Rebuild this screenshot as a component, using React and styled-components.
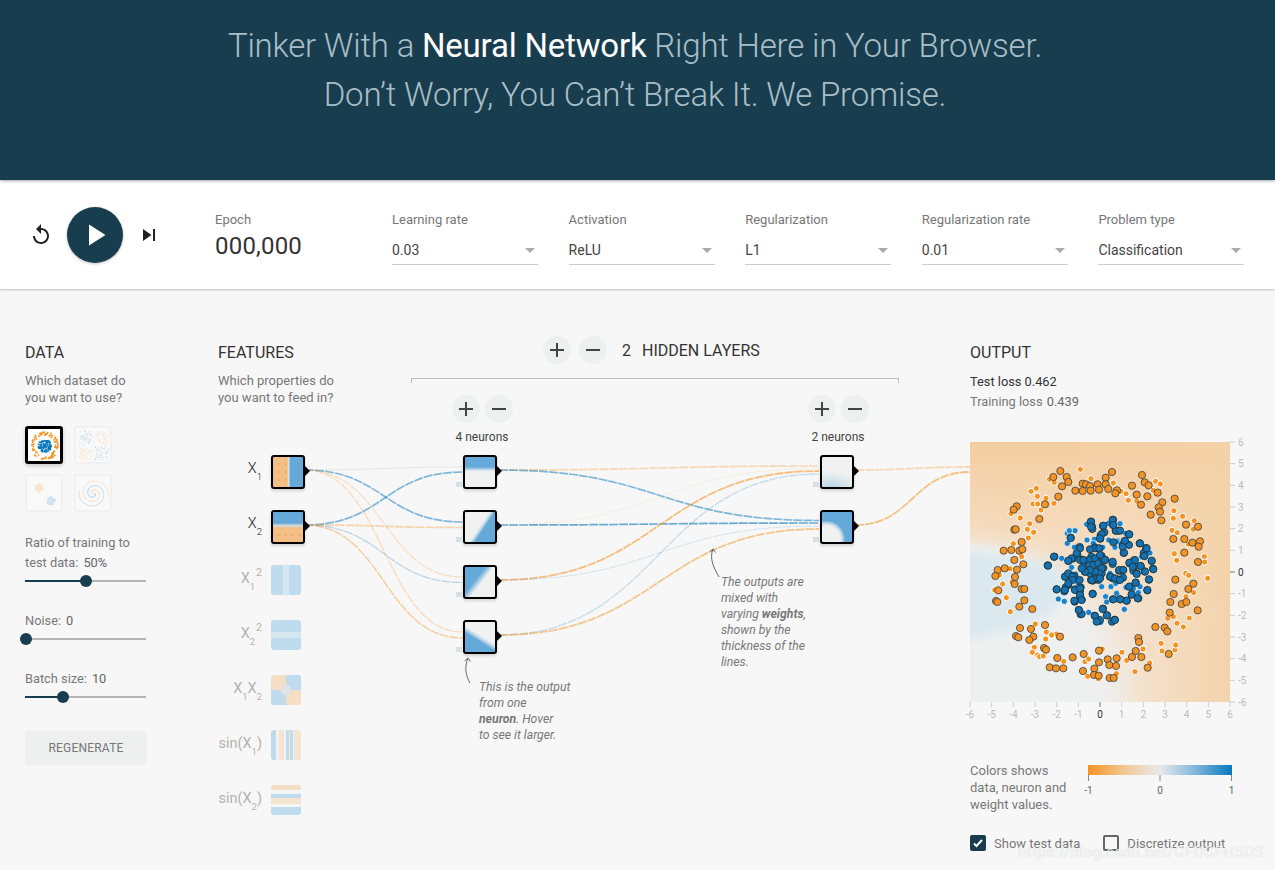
import styled, { createGlobalStyle } from "styled-components";

const NAVY = "#183d4e";
const BLUE = "#0877bd";
const ORANGE = "#f59322";
const HEAT_BLUE = "#64a9d8";
const HEAT_ORANGE = "#f3bf84";
const HEAT_LIGHT = "#f0f1f1";

const GlobalStyle = createGlobalStyle`
  html, body {
    margin: 0;
    padding: 0;
    background: #f7f7f7;
    font-family: Roboto, "Helvetica Neue", Arial, sans-serif;
    overflow: hidden;
  }
  * { box-sizing: border-box; }
`;

const Page = styled.div`
  width: 1275px;
  height: 870px;
  position: relative;
  overflow: hidden;
`;

const Header = styled.header`
  height: 180px;
  background: ${NAVY};
  padding: 21px 5px 0 0;
  text-align: center;
  position: relative;
  z-index: 2;
  box-shadow: 0 1px 3px rgba(0, 0, 0, 0.35);
`;

const Headline = styled.h1`
  margin: 0;
  font-size: 33px;
  line-height: 49px;
  font-weight: 300;
  letter-spacing: -0.2px;
  color: #a8bec7;
  b {
    font-weight: 400;
    color: #fff;
  }
`;

const Toolbar = styled.section`
  height: 109px;
  background: #fff;
  display: flex;
  align-items: center;
  padding: 1px 0 0 29px;
  box-shadow: 0 1px 2px rgba(0, 0, 0, 0.22);
  position: relative;
  z-index: 1;
`;

const Controls = styled.div`
  display: flex;
  align-items: center;
  width: 186px;
  color: #222;
  svg { display: block; fill: currentColor; }
`;

const PlayButton = styled.div`
  width: 56px;
  height: 56px;
  margin: 0 14px 0 14px;
  border-radius: 50%;
  background: ${NAVY};
  display: flex;
  align-items: center;
  justify-content: center;
  box-shadow: 0 1px 3px rgba(0, 0, 0, 0.25);
  svg { fill: #fff; }
`;

const EpochBox = styled.div`
  width: 177px;
  padding-top: 5px;
`;

const FieldLabel = styled.div`
  font-size: 13px;
  line-height: 18px;
  color: #777;
`;

const EpochValue = styled.div`
  margin-top: -1px;
  font-size: 24px;
  line-height: 36px;
  letter-spacing: 0.2px;
  color: #333;
`;

const Dropdowns = styled.div`
  display: flex;
  gap: 30.5px;
`;

const Dropdown = styled.div`
  width: 146.1px;
  padding-top: 5px;
`;

const DropdownValue = styled.div`
  height: 36px;
  padding-top: 8px;
  display: flex;
  align-items: center;
  justify-content: space-between;
  padding-right: 3px;
  font-size: 14px;
  color: #444;
  border-bottom: 1px solid #ccc;
  &::after {
    content: "";
    border-left: 5px solid transparent;
    border-right: 5px solid transparent;
    border-top: 5px solid #aaa;
  }
`;

const Main = styled.main`
  position: relative;
  height: 581px;
  padding: 54px 0 0 25px;
  display: grid;
  grid-template-columns: 193px 193px 488px 1fr;
  background: #f7f7f7;
`;

const LinkLayer = styled.svg`
  position: absolute;
  left: 0;
  top: 0;
  pointer-events: none;
`;

const Column = styled.div`
  display: flex;
  flex-direction: column;
  position: relative;
`;

const OutputColumn = styled(Column)`
  padding-left: 71px;
`;

const Heading = styled.h4`
  margin: 0;
  font-size: 16px;
  line-height: 20px;
  font-weight: 400;
  color: #333;
`;

const Note = styled.p`
  margin: 9px 0 0;
  font-size: 13px;
  line-height: 17px;
  color: #777;
`;

const DatasetGrid = styled.div`
  margin-top: 20px;
  display: grid;
  grid-template-columns: 38px 38px;
  grid-auto-rows: 38px;
  gap: 10px 11px;
`;

const DatasetThumb = styled.div`
  border-radius: 3px;
  border: ${({ $active }) => ($active ? "3px solid #000" : "2px solid #f1f1f1")};
  box-shadow: ${({ $active }) => ($active ? "0 2px 4px rgba(0,0,0,0.18)" : "none")};
  overflow: hidden;
  background: ${({ $active }) => ($active ? "#fff" : "#f9f9f9")};
  svg {
    display: block;
    width: 100%;
    height: 100%;
    opacity: ${({ $active }) => ($active ? 1 : 0.2)};
  }
`;

const SliderLabel = styled.div`
  font-size: 12.8px;
  line-height: 20px;
  color: #777;
  margin-top: 21px;
  width: 122px;
  span { margin-left: 5px; color: #666; }
`;

const SliderTrack = styled.div`
  position: relative;
  width: 121px;
  height: 18px;
  margin-top: -1px;
  &::before {
    content: "";
    position: absolute;
    left: 0;
    right: 0;
    top: 8px;
    height: 2px;
    background: #b4b4b4;
  }
`;

const SliderFill = styled.div`
  position: absolute;
  left: 0;
  top: 8px;
  height: 2px;
  background: ${NAVY};
`;

const SliderThumb = styled.div`
  position: absolute;
  top: 3px;
  width: 12px;
  height: 12px;
  margin-left: -6px;
  border-radius: 50%;
  background: ${NAVY};
`;

const RegenerateButton = styled.div`
  margin-top: 25px;
  width: 122px;
  height: 34px;
  border-radius: 3px;
  background: #eef0f0;
  color: #777;
  font-size: 12px;
  letter-spacing: 0.2px;
  display: flex;
  align-items: center;
  justify-content: center;
`;

const FeatureList = styled.div`
  margin-top: 49px;
  display: flex;
  flex-direction: column;
  gap: 21px;
  position: relative;
  z-index: 2;
`;

const FeatureRow = styled.div`
  display: flex;
  align-items: flex-start;
  height: 34px;
  gap: 9px;
`;

const FeatureName = styled.div`
  width: 44px;
  height: 30px;
  padding-bottom: 4px;
  display: flex;
  align-items: center;
  justify-content: flex-end;
  white-space: nowrap;
  font-size: 14.5px;
  font-weight: ${({ $on }) => ($on ? 300 : 400)};
  color: ${({ $on }) => ($on ? "#222" : "#b4b1ac")};
  sub, sup { line-height: 0; }
  sub { font-size: 9.5px; position: relative; top: 9px; }
  sup { font-size: 10.5px; position: relative; top: -5px; margin-left: 1px; }
`;

const DOTS = `radial-gradient(circle, rgba(245, 147, 34, 0.75) 0.5px, transparent 1px) 2px 3px / 7px 8px`;

const HEAT = {
  x1: `linear-gradient(90deg, transparent 0 47%, #e0e2e2 52%, ${HEAT_BLUE} 58%), ${DOTS}, ${HEAT_ORANGE}`,
  x2: `linear-gradient(180deg, ${HEAT_BLUE} 0 37%, #d3dbdd 45%, transparent 55%), ${DOTS}, ${HEAT_ORANGE}`,
  x1sq: "linear-gradient(90deg, #bedcee 0 40%, #d4e6ee 40% 60%, #bedcee 60%)",
  x2sq: "linear-gradient(180deg, #bedcee 0 40%, #d4e6ee 40% 60%, #bedcee 60%)",
  x1x2: "radial-gradient(circle, #dfe5e6 0 4px, transparent 6px), conic-gradient(#bedcee 0 25%, #f5dfc4 25% 50%, #bedcee 50% 75%, #f5dfc4 75%)",
  sinx1: "linear-gradient(90deg, #bedcee 0 15%, #f1f3f3 15% 25%, #f5e4cf 25% 45%, #f1f3f3 45% 50%, #bedcee 50% 60%, #f5e4cf 60% 65%, #bedcee 65% 72%, #f1f3f3 72% 78%, #f5e4cf 78% 100%)",
  sinx2: "linear-gradient(180deg, #f5dfc4 0 18%, #f4f5f5 18% 30%, #bedcee 30% 42%, #f5e4cf 42% 62%, #f4f5f5 62% 72%, #bedcee 72% 100%)",
  n1: `linear-gradient(180deg, ${HEAT_BLUE} 0 33%, #a8cde3 40%, ${HEAT_LIGHT} 47%)`,
  n2: `linear-gradient(124deg, ${HEAT_LIGHT} 0 48%, #c9dfec 53%, ${HEAT_BLUE} 60%)`,
  n3: `linear-gradient(128deg, ${HEAT_BLUE} 0 38%, #a8cde3 46%, ${HEAT_LIGHT} 54%)`,
  n4: `linear-gradient(212deg, ${HEAT_LIGHT} 0 46%, #b8d6e8 53%, ${HEAT_BLUE} 60%)`,
  m1: `radial-gradient(ellipse 90% 50% at 30% 100%, #b9d6e7 0, ${HEAT_LIGHT} 100%)`,
  m2: `radial-gradient(circle at 15% 90%, ${HEAT_LIGHT} 0 36%, #b3d3e6 44%, ${HEAT_BLUE} 50%)`,
};

const FeatureThumb = styled.div`
  width: ${({ $on }) => ($on ? "34px" : "30px")};
  height: ${({ $on }) => ($on ? "34px" : "30px")};
  flex: none;
  position: relative;
  border-radius: 3px;
  border: ${({ $on }) => ($on ? "2px solid #000" : "none")};
  background: ${({ $heat }) => HEAT[$heat]};
  box-shadow: ${({ $on }) => ($on ? "0 2px 3px rgba(0,0,0,0.15)" : "none")};
  &::after {
    content: "";
    display: ${({ $on }) => ($on ? "block" : "none")};
    position: absolute;
    right: -7px;
    top: 9px;
    border-left: 5px solid #000;
    border-top: 5px solid transparent;
    border-bottom: 5px solid transparent;
  }
`;

const LayerHead = styled.div`
  margin-top: -7px;
  height: 28px;
  display: flex;
  align-items: center;
  padding-left: 132px;
  gap: 8px;
`;

const RoundButton = styled.div`
  width: 28px;
  height: 28px;
  border-radius: 50%;
  background: #eef0f0;
  color: #444;
  display: flex;
  align-items: center;
  justify-content: center;
  svg { display: block; fill: currentColor; }
`;

const LayerCount = styled.div`
  margin-left: 7px;
  font-size: 16px;
  color: #333;
  display: flex;
  gap: 11px;
`;

const Bracket = styled.div`
  margin-top: 14px;
  height: 5px;
  border: 1px solid #bdbdbd;
  border-bottom: none;
`;

const Layers = styled.div`
  margin-top: 12px;
  display: flex;
  justify-content: space-between;
  padding: 0 11px 0 21px;
  position: relative;
  z-index: 2;
`;

const Layer = styled.div`
  width: 100px;
  display: flex;
  flex-direction: column;
  align-items: center;
`;

const NeuronButtons = styled.div`
  display: flex;
  gap: 5px;
`;

const NeuronCount = styled.div`
  margin-top: 5px;
  height: 18px;
  font-size: 12px;
  line-height: 18px;
  color: #444;
`;

const NeuronStack = styled.div`
  margin-top: 9px;
  margin-right: ${({ $shift }) => $shift}px;
  display: flex;
  flex-direction: column;
  gap: 21px;
  &> div::before {
    content: "";
    position: absolute;
    left: -9px;
    bottom: 0;
    width: 6px;
    height: 5px;
    background: #d7e0e4;
  }
`;

const Callout = styled.div`
  position: absolute;
  left: ${({ $x }) => $x}px;
  top: ${({ $y }) => $y}px;
  font-size: 12.2px;
  line-height: 16px;
  font-style: italic;
  color: #777;
  white-space: pre-line;
  z-index: 3;
  b { font-weight: 700; }
`;

const LossTest = styled.div`
  margin-top: 9px;
  font-size: 12.8px;
  line-height: 20px;
  color: #333;
`;

const LossTrain = styled.div`
  font-size: 12.8px;
  line-height: 20px;
  color: #777;
  span { color: #666; margin-left: 1px; }
`;

const PlotSvg = styled.svg`
  display: block;
  margin-top: 30px;
  overflow: visible;
`;

const Legend = styled.div`
  margin-top: 30px;
  display: flex;
`;

const LegendText = styled.div`
  width: 118px;
  font-size: 13px;
  line-height: 17px;
  color: #777;
`;

const LegendScale = styled.svg`
  display: block;
  margin-top: 3px;
  overflow: visible;
`;

const CheckRow = styled.div`
  margin-top: 21px;
  height: 18px;
  display: flex;
  align-items: center;
`;

const CheckBox = styled.div`
  width: 16px;
  height: 16px;
  border-radius: 2px;
  border: 2px solid ${({ $on }) => ($on ? NAVY : "#666")};
  background: ${({ $on }) => ($on ? NAVY : "transparent")};
  margin-right: 8px;
  display: flex;
  align-items: center;
  justify-content: center;
`;

const CheckText = styled.div`
  font-size: 13px;
  color: #777;
  margin-right: ${({ $gap }) => $gap || 0}px;
`;

const Watermark = styled.div`
  position: absolute;
  left: 1018px;
  top: 843px;
  font-size: 15px;
  line-height: 18px;
  letter-spacing: 0.5px;
  color: rgba(255, 255, 255, 0.75);
  text-shadow: 0 0 1px rgba(150, 150, 150, 0.45);
  white-space: nowrap;
  z-index: 5;
`;

function seeded(seed) {
  let s = seed;
  return () => {
    s = (s + 0x6d2b79f5) | 0;
    let t = Math.imul(s ^ (s >>> 15), 1 | s);
    t = (t + Math.imul(t ^ (t >>> 7), 61 | t)) ^ t;
    return ((t ^ (t >>> 14)) >>> 0) / 4294967296;
  };
}

function makeDataset(kind) {
  const r = seeded(kind.length * 97 + 3);
  const pts = [];
  if (kind === "circle") {
    for (let i = 0; i < 90; i++) {
      const a = r() * Math.PI * 2;
      const d = Math.sqrt(r()) * 6.5;
      pts.push([16 + Math.cos(a) * d, 16 + Math.sin(a) * d, BLUE]);
      const b = r() * Math.PI * 2;
      const e = 10.5 + r() * 3.5;
      pts.push([16 + Math.cos(b) * e, 16 + Math.sin(b) * e, ORANGE]);
    }
  } else if (kind === "xor") {
    for (let i = 0; i < 220; i++) {
      const x = 2 + r() * 28;
      const y = 2 + r() * 28;
      if (Math.abs(x - 16) < 1 || Math.abs(y - 16) < 1) continue;
      pts.push([x, y, (x - 16) * (y - 16) > 0 ? BLUE : ORANGE]);
    }
  } else if (kind === "gauss") {
    for (let i = 0; i < 90; i++) {
      const a = r() * Math.PI * 2;
      const d = Math.sqrt(r()) * 4;
      pts.push([11 + Math.cos(a) * d, 11 + Math.sin(a) * d, ORANGE]);
      const b = r() * Math.PI * 2;
      const e = Math.sqrt(r()) * 4;
      pts.push([22 + Math.cos(b) * e, 23 + Math.sin(b) * e, BLUE]);
    }
  } else {
    for (let i = 0; i < 110; i++) {
      const t = (i / 110) * 3.1 * Math.PI;
      const d = 1 + t * 1.35;
      pts.push([16 + Math.cos(t) * d, 16 + Math.sin(t) * d, BLUE]);
      pts.push([16 - Math.cos(t) * d, 16 - Math.sin(t) * d, ORANGE]);
    }
  }
  return pts;
}

function Dataset({ kind, active }) {
  const size = active ? 1.6 : 1;
  return (
    <DatasetThumb $active={active}>
      <svg viewBox="0 0 32 32">
        {makeDataset(kind).map(([x, y, c], i) => (
          <rect key={i} x={x} y={y} width={size} height={size} fill={c} />
        ))}
      </svg>
    </DatasetThumb>
  );
}

function Slider({ value }) {
  return (
    <SliderTrack>
      <SliderFill style={{ width: value }} />
      <SliderThumb style={{ left: value }} />
    </SliderTrack>
  );
}

const FEATURES = [
  { heat: "x1", on: true, name: <>X<sub>1</sub></> },
  { heat: "x2", on: true, name: <>X<sub>2</sub></> },
  { heat: "x1sq", name: <>X<sub>1</sub><sup>2</sup></> },
  { heat: "x2sq", name: <>X<sub>2</sub><sup>2</sup></> },
  { heat: "x1x2", name: <>X<sub>1</sub>X<sub>2</sub></> },
  { heat: "sinx1", name: <>sin(X<sub>1</sub>)</> },
  { heat: "sinx2", name: <>sin(X<sub>2</sub>)</> },
];

// page coordinates, viewBox of the link layer starts at y=289
const LINKS = [
  [305, 470, 463, 467, "#bbb", 1, 0.3],
  [305, 470, 463, 522, BLUE, 1.7, 0.5],
  [305, 470, 463, 577, ORANGE, 1.2, 0.25],
  [305, 470, 463, 632, ORANGE, 1.2, 0.3],
  [305, 525, 463, 472, BLUE, 1.7, 0.5],
  [305, 525, 463, 527.5, ORANGE, 1.7, 0.35],
  [305, 525, 463, 582.5, BLUE, 1.2, 0.28],
  [305, 525, 463, 638, ORANGE, 1.5, 0.42],
  [499, 470, 819, 466, ORANGE, 1.7, 0.32],
  [499, 470, 819, 520.5, BLUE, 1.7, 0.5],
  [499, 525, 819, 468.5, ORANGE, 1, 0.12],
  [499, 525, 819, 523, BLUE, 1.7, 0.6],
  [499, 580, 819, 471, ORANGE, 1.8, 0.58],
  [499, 580, 819, 526, BLUE, 1, 0.16],
  [499, 635, 819, 474, BLUE, 1.3, 0.22],
  [499, 635, 819, 529, ORANGE, 1.8, 0.5],
  [855, 470, 970, 467, ORANGE, 1.8, 0.3],
  [855, 525, 970, 472, ORANGE, 1.8, 0.55],
];

const curve = (x0, y0, x1, y1) => {
  const m = (x0 + x1) / 2;
  return `M${x0} ${y0}C${m} ${y0} ${m} ${y1} ${x1} ${y1}`;
};

// scatter points as read from the plot, 3 units per pixel, plot origin at 30,36
const ORANGE_TRAIN = [[301,123],[280,141],[320,141],[325,156],[306,169],[368,161],[378,163],[413,163],[437,143],[456,126],[437,163],[390,168],[368,183],[346,182],[392,182],[417,179],[445,177],[471,181],[466,190],[516,167],[546,135],[554,157],[566,166],[593,188],[530,194],[562,199],[543,224],[607,217],[596,232],[600,245],[572,254],[604,271],[644,206],[295,200],[255,223],[238,267],[170,229],[161,239],[163,299],[167,298],[185,336],[131,362],[154,360],[178,362],[187,358],[163,390],[190,403],[171,419],[113,420],[106,438],[134,415],[165,441],[164,462],[185,477],[193,477],[115,481],[108,513],[112,516],[178,530],[193,511],[217,537],[180,594],[213,597],[168,618],[175,622],[220,620],[208,630],[255,585],[300,620],[252,654],[258,659],[292,684],[338,682],[269,712],[288,715],[310,715],[371,672],[369,723],[403,716],[402,735],[416,737],[417,697],[417,662],[443,688],[448,705],[470,685],[468,708],[449,744],[461,744],[516,681],[527,663],[544,681],[535,624],[537,636],[563,713],[626,672],[586,591],[614,593],[622,604],[629,548],[713,541],[665,522],[679,516],[631,516],[641,492],[685,477],[700,461],[646,449],[714,396],[673,368],[640,327],[673,327],[697,338],[720,334],[716,350],[678,284],[714,290]];
const ORANGE_TEST = [[361,118],[268,148],[283,157],[393,146],[460,159],[483,184],[498,191],[505,211],[530,213],[587,154],[601,162],[580,181],[213,184],[229,175],[232,199],[258,205],[219,222],[233,222],[282,220],[243,240],[153,251],[181,264],[209,281],[202,298],[221,307],[205,324],[160,341],[175,366],[185,380],[150,416],[118,435],[128,462],[156,456],[104,480],[139,503],[151,545],[226,582],[259,606],[289,612],[275,615],[257,627],[223,652],[217,667],[233,675],[239,680],[250,678],[311,694],[375,695],[386,687],[383,739],[415,746],[469,731],[427,657],[486,667],[500,691],[525,725],[549,657],[569,699],[603,640],[606,663],[645,660],[647,645],[651,580],[670,591],[688,564],[640,560],[623,565],[678,500],[701,488],[677,430],[686,436],[733,380],[734,396],[743,445],[650,391],[643,371],[685,342],[700,298],[703,272],[668,259],[640,265],[642,242],[636,301],[652,308]];
const BLUE_TRAIN = [[393,275],[396,290],[397,297],[459,269],[429,288],[459,285],[467,302],[475,302],[433,307],[422,316],[421,326],[507,313],[332,323],[494,334],[488,345],[507,345],[539,340],[558,354],[491,369],[551,369],[553,378],[359,351],[405,352],[418,356],[352,373],[338,386],[325,393],[283,380],[263,406],[366,389],[380,392],[394,380],[393,397],[387,405],[372,410],[408,400],[425,378],[430,388],[436,390],[430,414],[458,402],[509,400],[522,391],[525,406],[542,408],[575,393],[579,416],[554,424],[520,422],[530,430],[489,420],[477,422],[475,449],[489,443],[450,440],[458,445],[316,440],[323,434],[336,437],[344,440],[359,450],[362,472],[325,465],[317,472],[313,484],[290,478],[345,478],[360,483],[360,497],[365,509],[344,515],[398,491],[398,452],[393,450],[415,450],[420,442],[407,430],[390,430],[375,425],[399,420],[415,420],[425,430],[515,494],[508,470],[527,458],[567,449],[562,481],[535,505],[459,508],[481,508],[500,512],[429,536],[356,540],[362,553],[404,557],[441,556],[416,572],[456,575],[464,569]];
// the dense middle, read from a closer crop (offset 240 in both axes)
const BLUE_CORE = [[120,150],[130,150],[150,150],[165,145],[148,165],[160,165],[175,160],[190,150],[195,150],[185,175],[178,190],[165,185],[150,180],[135,185],[125,175],[172,205],[180,205],[155,210],[180,135],[165,115],[150,118],[178,115],[120,115],[110,130],[95,145],[85,152],[75,200],[85,190],[97,200],[98,210],[85,220],[105,240],[120,235],[120,255],[75,240],[50,238],[103,272],[125,270],[218,155],[212,200],[225,205],[240,210],[238,180],[250,180],[268,158],[285,150],[290,192],[278,170],[302,168],[315,185],[335,152],[340,178],[327,208],[287,218],[268,230],[322,240],[275,253],[293,265],[260,272],[240,268],[220,268],[158,252],[188,297],[201,316],[225,330],[180,330],[165,318],[125,312],[117,300],[170,335],[300,100],[320,115],[313,138],[252,128],[248,110],[255,92],[220,97],[268,73],[228,62],[240,62],[218,30],[220,45],[190,47],[185,72],[180,85],[153,35],[153,50],[92,84],[42,140],[24,167]].map(([x, y]) => [x + 240, y + 240]);
const BLUE_TEST = [[345,302],[322,310],[330,318],[380,283],[445,280],[480,281],[473,332],[381,330],[403,328],[446,330],[321,339],[343,352],[497,310],[570,369],[545,380],[335,412],[453,470],[498,472],[520,476],[540,470],[425,470],[437,500],[295,507],[313,514],[440,516],[493,538],[386,547],[422,577],[347,432],[467,460],[428,352],[470,335],[328,302],[400,340],[322,340],[505,340],[465,352],[305,385],[355,460],[473,498],[470,490],[535,488],[450,430]];

const px = (v) => (v - 30) / 3;
const py = (v) => (v - 36) / 3;
const TICKS = [-6, -5, -4, -3, -2, -1, 0, 1, 2, 3, 4, 5, 6];

function Plot() {
  const scale = 260 / 12;
  return (
    <PlotSvg width="290" height="290">
      <defs>
        <clipPath id="plotClip"><rect width="260" height="260" /></clipPath>
        <linearGradient id="heatBase" x1="0" y1="0" x2="0" y2="1">
          <stop offset="0" stopColor="#f4cfa3" />
          <stop offset="0.4" stopColor="#f5dcc0" />
          <stop offset="0.7" stopColor="#f3e2d0" />
          <stop offset="1" stopColor="#f3e2d0" />
        </linearGradient>
        <linearGradient id="heatRight" x1="0" y1="0" x2="1" y2="0">
          <stop offset="0.62" stopColor="#f4d2a8" stopOpacity="0" />
          <stop offset="1" stopColor="#f4d2a8" stopOpacity="0.95" />
        </linearGradient>
        <filter id="soft" x="-30%" y="-30%" width="160%" height="160%">
          <feGaussianBlur stdDeviation="14" />
        </filter>
        <filter id="softer" x="-30%" y="-30%" width="160%" height="160%">
          <feGaussianBlur stdDeviation="5" />
        </filter>
        <pattern id="dither" width="4" height="4" patternUnits="userSpaceOnUse">
          <rect width="1" height="1" fill="#f59322" opacity="0.3" />
        </pattern>
      </defs>
      <g clipPath="url(#plotClip)">
        <rect width="260" height="260" fill="url(#heatBase)" />
        <rect width="260" height="260" fill="url(#heatRight)" />
        <polygon points="-30,98 60,112 100,135 140,190 160,290 -30,290" fill="#eef0f0" filter="url(#soft)" />
        <polygon points="-30,98 40,110 80,135 105,180 115,290 -30,290" fill="#eef0f0" filter="url(#softer)" />
        <polygon points="-30,106 30,112 80,122 105,140 85,170 35,190 -30,205" fill="#dbe9ef" filter="url(#softer)" />
        <rect width="110" height="26" fill="url(#dither)" />
      </g>
      {TICKS.map((t) => {
        const x = (t + 6) * scale;
        const y = (6 - t) * scale;
        const c = t === 0 ? "#777" : "#ccc";
        const tc = t === 0 ? "#333" : "#bbb";
        return (
          <g key={t} fontSize="10" fontFamily="Roboto, sans-serif">
            <line x1={x} y1="260" x2={x} y2="265" stroke={c} />
            <line x1="260" y1={y} x2="265" y2={y} stroke={c} />
            <text x={x} y="276" textAnchor="middle" fill={tc}>{t}</text>
            <text x="268" y={y + 3.5} fill={tc}>{t}</text>
          </g>
        );
      })}
      {ORANGE_TEST.map(([x, y], i) => (
        <circle key={`ot${i}`} cx={px(x)} cy={py(y)} r="3.1" fill={ORANGE} stroke="#fff" strokeWidth="1" />
      ))}
      {BLUE_TEST.map(([x, y], i) => (
        <circle key={`bt${i}`} cx={px(x)} cy={py(y)} r="3.1" fill="#1a82c9" stroke="#fff" strokeOpacity="0.7" strokeWidth="1" />
      ))}
      {ORANGE_TRAIN.map(([x, y], i) => (
        <circle key={`o${i}`} cx={px(x)} cy={py(y)} r="3.6" fill={ORANGE} stroke="#444" strokeOpacity="0.85" strokeWidth="1" />
      ))}
      {[...BLUE_TRAIN, ...BLUE_CORE].map(([x, y], i) => (
        <circle key={`b${i}`} cx={px(x)} cy={py(y)} r="3.6" fill="#1272b5" stroke="#233" strokeOpacity="0.85" strokeWidth="1" />
      ))}
    </PlotSvg>
  );
}

function Plus() {
  return (
    <svg width="24" height="24" viewBox="0 0 24 24">
      <path d="M19 13h-6v6h-2v-6H5v-2h6V5h2v6h6v2z" />
    </svg>
  );
}

function Minus() {
  return (
    <svg width="24" height="24" viewBox="0 0 24 24">
      <path d="M19 13H5v-2h14v2z" />
    </svg>
  );
}

const DROPDOWNS = [
  ["Learning rate", "0.03"],
  ["Activation", "ReLU"],
  ["Regularization", "L1"],
  ["Regularization rate", "0.01"],
  ["Problem type", "Classification"],
];

export default function App() {
  return (
    <Page>
      <GlobalStyle />
      <Header>
        <Headline>
          Tinker With a <b>Neural Network</b> Right Here in Your Browser.
          <br />
          Don’t Worry, You Can’t Break It. We Promise.
        </Headline>
      </Header>

      <Toolbar>
        <Controls>
          <svg width="24" height="24" viewBox="0 0 24 24">
            <path d="M12 5V1L7 6l5 5V7c3.31 0 6 2.69 6 6s-2.69 6-6 6-6-2.69-6-6H4c0 4.42 3.58 8 8 8s8-3.58 8-8-3.58-8-8-8z" />
          </svg>
          <PlayButton>
            <svg width="36" height="36" viewBox="0 0 24 24"><path d="M8 5v14l11-7z" /></svg>
          </PlayButton>
          <svg width="24" height="24" viewBox="0 0 24 24">
            <path d="M6 18l8.5-6L6 6v12zM16 6v12h2V6h-2z" />
          </svg>
        </Controls>
        <EpochBox>
          <FieldLabel>Epoch</FieldLabel>
          <EpochValue>000,000</EpochValue>
        </EpochBox>
        <Dropdowns>
          {DROPDOWNS.map(([label, value]) => (
            <Dropdown key={label}>
              <FieldLabel>{label}</FieldLabel>
              <DropdownValue>{value}</DropdownValue>
            </Dropdown>
          ))}
        </Dropdowns>
      </Toolbar>

      <Main>
        <LinkLayer width="1275" height="581" viewBox="0 289 1275 581">
          {LINKS.map(([x0, y0, x1, y1, color, w, op], i) => (
            <path
              key={i}
              d={curve(x0, y0, x1, y1)}
              fill="none"
              stroke={color}
              strokeWidth={w}
              strokeOpacity={op}
              strokeDasharray="9 1"
            />
          ))}
          <path d="M470 683C466 676 464 668 468 658M468 658l-3.5 3M468 658l2.5 3.500" fill="none" stroke="#666" strokeWidth="1" />
          <path d="M719 577C714 568 709 559 713 549M713 549l-3.500 3M713 549l2.500 3.500" fill="none" stroke="#666" strokeWidth="1" />
        </LinkLayer>

        <Column>
          <Heading>DATA</Heading>
          <Note>Which dataset do<br />you want to use?</Note>
          <DatasetGrid>
            <Dataset kind="circle" active />
            <Dataset kind="xor" />
            <Dataset kind="gauss" />
            <Dataset kind="spiral" />
          </DatasetGrid>
          <SliderLabel>Ratio of training to<br />test data:<span>50%</span></SliderLabel>
          <Slider value={61} />
          <SliderLabel>Noise:<span>0</span></SliderLabel>
          <Slider value={1} />
          <SliderLabel>Batch size:<span>10</span></SliderLabel>
          <Slider value={38} />
          <RegenerateButton>REGENERATE</RegenerateButton>
        </Column>

        <Column>
          <Heading>FEATURES</Heading>
          <Note>Which properties do<br />you want to feed in?</Note>
          <FeatureList>
            {FEATURES.map((f) => (
              <FeatureRow key={f.heat}>
                <FeatureName $on={f.on}>{f.name}</FeatureName>
                <FeatureThumb $on={f.on} $heat={f.heat} />
              </FeatureRow>
            ))}
          </FeatureList>
        </Column>

        <Column>
          <LayerHead>
            <RoundButton><Plus /></RoundButton>
            <RoundButton><Minus /></RoundButton>
            <LayerCount><span>2</span><span>HIDDEN LAYERS</span></LayerCount>
          </LayerHead>
          <Bracket />
          <Layers>
            <Layer>
              <NeuronButtons>
                <RoundButton><Plus /></RoundButton>
                <RoundButton><Minus /></RoundButton>
              </NeuronButtons>
              <NeuronCount>4 neurons</NeuronCount>
              <NeuronStack $shift={5}>
                {["n1", "n2", "n3", "n4"].map((h) => (
                  <FeatureThumb key={h} $on $heat={h} />
                ))}
              </NeuronStack>
            </Layer>
            <Layer>
              <NeuronButtons>
                <RoundButton><Plus /></RoundButton>
                <RoundButton><Minus /></RoundButton>
              </NeuronButtons>
              <NeuronCount>2 neurons</NeuronCount>
              <NeuronStack $shift={3}>
                {["m1", "m2"].map((h) => (
                  <FeatureThumb key={h} $on $heat={h} />
                ))}
              </NeuronStack>
            </Layer>
          </Layers>
        </Column>

        <OutputColumn>
          <Heading>OUTPUT</Heading>
          <LossTest>Test loss 0.462</LossTest>
          <LossTrain>Training loss <span>0.439</span></LossTrain>
          <Plot />
          <Legend>
            <LegendText>Colors shows<br />data, neuron and<br />weight values.</LegendText>
            <LegendScale width="145" height="34">
              <defs>
                <linearGradient id="legendGrad">
                  <stop offset="0" stopColor={ORANGE} />
                  <stop offset="0.25" stopColor="#f3c792" />
                  <stop offset="0.5" stopColor="#e8eaeb" />
                  <stop offset="0.75" stopColor="#7fb5da" />
                  <stop offset="1" stopColor={BLUE} />
                </linearGradient>
              </defs>
              <rect width="144" height="10" fill="url(#legendGrad)" />
              {[[0.5, "-1"], [72, "0"], [143.5, "1"]].map(([x, t]) => (
                <g key={t}>
                  <line x1={x} y1="10" x2={x} y2="16" stroke="#888" />
                  <text x={x} y="29" textAnchor="middle" fontSize="10" fontFamily="Roboto, sans-serif" fill="#666">{t}</text>
                </g>
              ))}
            </LegendScale>
          </Legend>
          <CheckRow>
            <CheckBox $on>
              <svg width="12" height="12" viewBox="0 0 24 24">
                <path d="M4 13l5 5L20 6" fill="none" stroke="#fff" strokeWidth="4" />
              </svg>
            </CheckBox>
            <CheckText $gap={23}>Show test data</CheckText>
            <CheckBox />
            <CheckText>Discretize output</CheckText>
          </CheckRow>
        </OutputColumn>

        <Callout $x={479} $y={390}>
          This is the output{"\n"}from one{"\n"}<b>neuron</b>. Hover{"\n"}to see it larger.
        </Callout>
        <Callout $x={721} $y={285}>
          The outputs are{"\n"}mixed with{"\n"}varying <b>weights</b>,{"\n"}shown by the{"\n"}thickness of the{"\n"}lines.
        </Callout>
      </Main>
      <Watermark>https://blog.csdn.net/GFDGFHSDS</Watermark>
    </Page>
  );
}
